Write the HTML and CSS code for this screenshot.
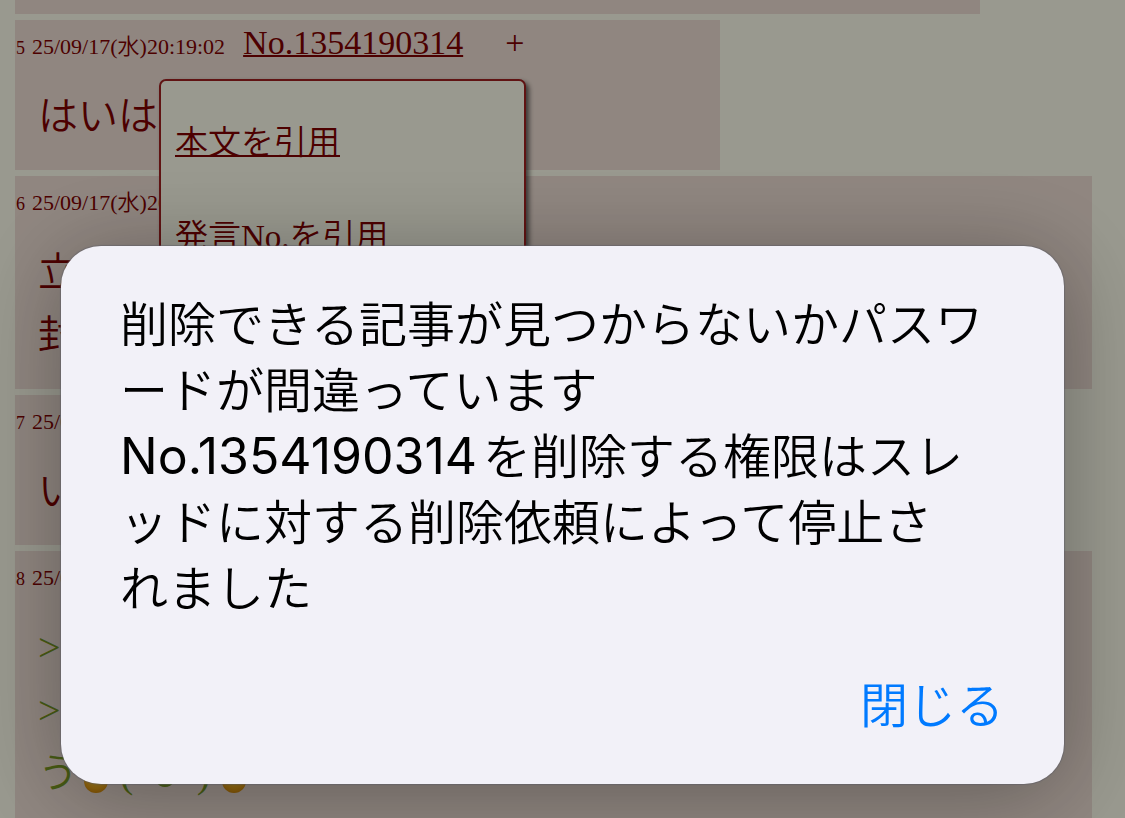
FILE: index.html
```html
<!DOCTYPE html>
<html lang="ja">
<head>
    <meta charset="UTF-8">
    <meta name="viewport" content="width=device-width, initial-scale=1">
    <title>スレッド</title>
    <link rel="stylesheet" href="styles.css">
</head>
<body>
<main class="thread">
    <div class="reply reply-prev"></div>
    <div class="reply reply-short">
        <div class="head">
            <span class="rsc">5</span>
            <span class="date">25/09/17(水)20:19:02</span>
            <a class="no" href="#">No.1354190314</a>
            <button class="sod" type="button">+</button>
        </div>
        <div class="text">はいは</div>
        <div class="popup">
            <a href="#">本文を引用</a>
            <a href="#">発言No.を引用</a>
        </div>
    </div>
    <div class="reply reply-wide">
        <div class="head">
            <span class="rsc">6</span>
            <span class="date">25/09/17(水)20</span>
        </div>
        <div class="text">立<br>封</div>
    </div>
    <div class="reply reply-short">
        <div class="head">
            <span class="rsc">7</span>
            <span class="date">25/09</span>
        </div>
        <div class="text">い</div>
    </div>
    <div class="reply reply-wide">
        <div class="head">
            <span class="rsc">8</span>
            <span class="date">25/09</span>
        </div>
        <div class="text quote">
            <div>&gt;</div>
            <div>&gt;</div>
            <div class="kao">
                <span>う</span>
                <i class="ball"></i>
                <span class="face">
                    <span>(</span>
                    <svg width="20" height="20" viewBox="0 0 20 20"><path d="M1 9Q10 20 19 9" fill="none" stroke="currentColor" stroke-width="3"/></svg>
                    <span>)</span>
                </span>
                <i class="ball"></i>
            </div>
        </div>
    </div>
</main>
<div class="overlay">
    <div class="alert" role="alertdialog" aria-modal="true" aria-describedby="msg">
        <p class="msg" id="msg">削除できる記事が見つからないかパスワ<br>ードが間違っています<br><span class="num">No.1354190314</span>を削除する権限はスレ<br>ッドに対する削除依頼によって停止さ<br>れました</p>
        <button class="close" type="button">閉じる</button>
    </div>
</div>
</body>
</html>
```
FILE: styles.css
```css
*{
    box-sizing: border-box;
    padding: 0;
    margin: 0;
}
html,body{
    height: 100%;
}
body{
    overflow: hidden;
    background: #ffffee;
    color: #800000;
    font-family: "Liberation Serif", "Noto Sans CJK JP", serif;
}
a{
    color: #800000;
}
button{
    border: 0;
    background: none;
    font-family: inherit;
    cursor: pointer;
}
.thread{
    display: flex;
    flex-direction: column;
    gap: 6px;
    height: 100%;
    padding: 0 33px 0 15px;
    overflow: hidden;
}
/* レス */
.reply{
    position: relative;
    flex-shrink: 0;
    padding-bottom: 22px;
    background: #f0e0d6;
}
.reply-prev{
    width: 965px;
    height: 14px;
    padding: 0;
}
.reply-short{
    width: 705px;
}
.reply-wide{
    width: 100%;
}
.head{
    display: flex;
    align-items: baseline;
    height: 65px;
    padding-left: 1px;
    line-height: 46px;
    white-space: nowrap;
}
.head::before{
    content: "\200b";
    font-size: 34px;
}
.rsc{
    width: 16px;
    font-size: 18px;
}
.date{
    font-size: 22px;
    font-weight: 350;
}
.no{
    margin-left: 18px;
    font-size: 34px;
    text-decoration-thickness: 2px;
}
.sod{
    margin-left: 42px;
    color: #800000;
    font-size: 34px;
}
.text{
    padding-left: 23px;
    font-size: 40px;
    font-weight: 350;
    line-height: 63px;
}
.quote{
    color: #789922;
}
.kao{
    display: flex;
    align-items: center;
    height: 63px;
}
.ball{
    width: 24px;
    height: 24px;
    margin-top: 14px;
    border-radius: 50%;
    background: radial-gradient(circle at 50% 30%, #ffd84a, #f0a818 60%, #c87800);
}
.kao .ball:nth-child(2){
    margin-left: 6px;
}
.face{
    display: flex;
    align-items: center;
    justify-content: space-between;
    width: 114px;
    padding: 0 12px;
}
.face svg{
    margin-top: 14px;
}
/* 引用メニュー */
.popup{
    position: absolute;
    top: 59px;
    left: 144px;
    z-index: 1;
    display: flex;
    flex-direction: column;
    gap: 30px;
    width: 367px;
    height: 300px;
    padding: 30px 14px;
    border: 2px solid #a02020;
    border-radius: 7px;
    background: #ffffee;
    box-shadow: 3px 3px 5px rgba(0,0,0,0.6);
    font-size: 33px;
    font-weight: 350;
    line-height: 64px;
}
.popup a{
    text-decoration-thickness: 2px;
}
/* ダイアログ */
.overlay{
    position: fixed;
    top: 0;
    right: 0;
    bottom: 0;
    left: 0;
    z-index: 10;
    padding: 246px 61px 0;
    background: rgba(0,0,0,0.4);
}
.alert{
    display: flex;
    flex-direction: column;
    gap: 51px;
    padding: 46px 60px 45px 59px;
    border-radius: 40px;
    background: #f2f1f8;
    box-shadow: 0 0 1px 1px rgba(90,90,100,0.5), 0 10px 90px rgba(0,0,0,0.32);
    font-family: Inter, "Noto Sans CJK JP", sans-serif;
    font-size: 48px;
    font-weight: 350;
    line-height: 66px;
}
.msg{
    color: #000;
    white-space: nowrap;
}
.num{
    margin-right: 6px;
    font-size: 50px;
    font-optical-sizing: none;
    font-weight: 400;
    line-height: 48px;
}
.close{
    align-self: flex-end;
    color: #007aff;
    font-size: 48px;
    font-weight: 350;
    line-height: 66px;
}
```
